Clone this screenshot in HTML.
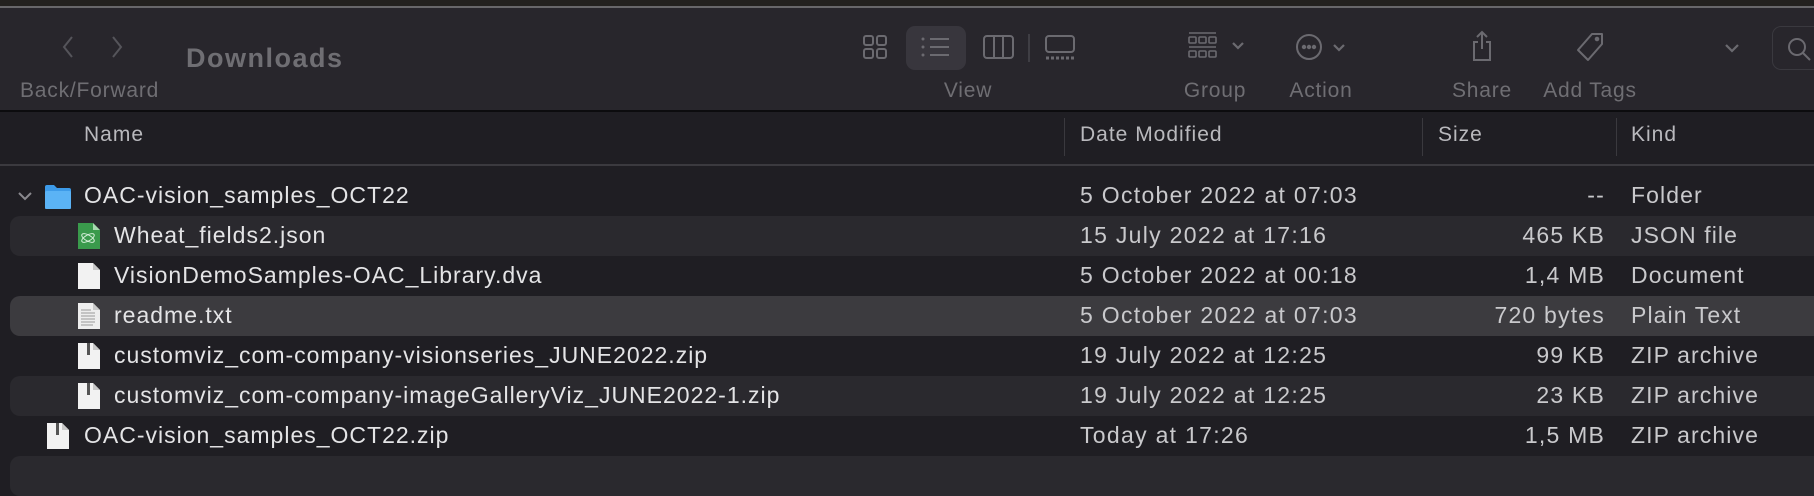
<!DOCTYPE html>
<html><head><meta charset="utf-8"><style>
*{margin:0;padding:0;box-sizing:border-box}
body{width:1814px;height:460px;overflow:hidden;background:#1f1e23;font-family:"Liberation Sans",sans-serif;position:relative}
.a{position:absolute;white-space:nowrap}
.lbl{color:#6f6e73;font-size:21px;letter-spacing:0.8px;top:79px;transform:translateX(-50%)}
.row{position:absolute;left:10px;width:1804px;height:40px;border-radius:10px 0 0 10px}
.nm{color:#e4e4e6;font-size:23px;letter-spacing:1px}
.dt{color:#c9c9cc;font-size:23px;letter-spacing:1.3px}
.sz{color:#c9c9cc;font-size:23px;letter-spacing:1.2px;text-align:right;width:250px;left:1355px}
.kd{color:#c9c9cc;font-size:23px;letter-spacing:1.1px;left:1631px}
.hd{color:#b9b9bd;font-size:21px;letter-spacing:1px;top:123px}
.ic{position:absolute}
</style></head><body>
<div class="a" style="left:0;top:0;width:1814px;height:6px;background:#23211f"></div>
<div class="a" style="left:0;top:6px;width:1814px;height:2px;background:#68676a"></div>
<div class="a" style="left:0;top:8px;width:1814px;height:103px;background:#28262c"></div>
<div class="a" style="left:0;top:110px;width:1814px;height:2px;background:#0c0c0e"></div>

<svg class="ic" style="left:58px;top:34px" width="70" height="26" viewBox="0 0 70 26" fill="none" stroke="#55545a" stroke-width="2"><path d="M14 3 L6 13 L14 23"/><path d="M55 3 L63 13 L55 23"/></svg>
<div class="a" style="left:20px;top:79px;color:#6f6e73;font-size:21px;letter-spacing:0.8px">Back/Forward</div>
<div class="a" style="left:186px;top:43px;color:#6f6e73;font-size:27px;font-weight:bold;letter-spacing:1.5px">Downloads</div>

<svg class="ic" style="left:862px;top:34px" width="26" height="26" fill="none" stroke="#6b6a70" stroke-width="2"><rect x="2" y="2" width="9" height="9" rx="2"/><rect x="15" y="2" width="9" height="9" rx="2"/><rect x="2" y="15" width="9" height="9" rx="2"/><rect x="15" y="15" width="9" height="9" rx="2"/></svg>
<div class="a" style="left:906px;top:26px;width:60px;height:44px;background:#38363d;border-radius:9px"></div>
<svg class="ic" style="left:920px;top:36px" width="32" height="22" fill="#6b6a70" stroke="#6b6a70" stroke-width="2"><circle cx="3" cy="3" r="1.5" stroke="none"/><circle cx="3" cy="11" r="1.5" stroke="none"/><circle cx="3" cy="19" r="1.5" stroke="none"/><path d="M10 3H29M10 11H29M10 19H29"/></svg>
<svg class="ic" style="left:982px;top:34px" width="34" height="26" fill="none" stroke="#6b6a70" stroke-width="2"><rect x="2" y="2" width="29" height="22" rx="3"/><path d="M12 2V24M21 2V24"/></svg>
<div class="a" style="left:1028px;top:34px;width:2px;height:28px;background:#3f3e44"></div>
<svg class="ic" style="left:1044px;top:34px" width="32" height="28" fill="none" stroke="#6b6a70" stroke-width="2"><rect x="2" y="2" width="28" height="16" rx="3"/><path d="M2 24H30" stroke-dasharray="3 2" stroke-width="3"/></svg>
<div class="a lbl" style="left:968px">View</div>

<svg class="ic" style="left:1188px;top:31px" width="70" height="30" fill="none" stroke="#6b6a70" stroke-width="1.6"><path d="M1 2H28M1 16H28"/><rect x="1" y="6" width="7" height="6" rx="1"/><rect x="11" y="6" width="7" height="6" rx="1"/><rect x="21" y="6" width="7" height="6" rx="1"/><rect x="1" y="20" width="7" height="6" rx="1"/><rect x="11" y="20" width="7" height="6" rx="1"/><rect x="21" y="20" width="7" height="6" rx="1"/><path d="M45 12L50 17L55 12" stroke-width="2.2"/></svg>
<div class="a lbl" style="left:1215px">Group</div>
<svg class="ic" style="left:1295px;top:33px" width="62" height="28" fill="none" stroke="#6b6a70" stroke-width="2"><circle cx="14" cy="14" r="12"/><circle cx="9" cy="14" r="1.2" fill="#6b6a70"/><circle cx="14" cy="14" r="1.2" fill="#6b6a70"/><circle cx="19" cy="14" r="1.2" fill="#6b6a70"/><path d="M39 12L44 17L49 12" stroke-width="2.2"/></svg>
<div class="a lbl" style="left:1321px">Action</div>
<svg class="ic" style="left:1470px;top:30px" width="24" height="32" fill="none" stroke="#6b6a70" stroke-width="2"><path d="M12 2V19M7 7L12 2L17 7"/><path d="M8 12H4V30H20V12H16"/></svg>
<div class="a lbl" style="left:1482px">Share</div>
<svg class="ic" style="left:1576px;top:32px" width="30" height="30" fill="none" stroke="#6b6a70" stroke-width="2"><path d="M16 2H26V12L12 28L2 18Z" stroke-linejoin="round"/><circle cx="21" cy="7" r="1.3" fill="#6b6a70"/></svg>
<div class="a lbl" style="left:1590px">Add Tags</div>
<svg class="ic" style="left:1724px;top:42px" width="16" height="12" fill="none" stroke="#6b6a70" stroke-width="2.2"><path d="M2 3L8 9L14 3"/></svg>
<div class="a" style="left:1772px;top:26px;width:60px;height:44px;border:1.5px solid #3a393f;border-radius:9px"></div>
<svg class="ic" style="left:1786px;top:36px" width="28" height="26" fill="none" stroke="#6b6a70" stroke-width="2"><circle cx="11" cy="11" r="8"/><path d="M17 17L24 24"/></svg>

<div class="a hd" style="left:84px">Name</div>
<div class="a" style="left:1064px;top:118px;width:1px;height:38px;background:#3a393e"></div>
<div class="a hd" style="left:1080px">Date Modified</div>
<div class="a" style="left:1422px;top:118px;width:1px;height:38px;background:#3a393e"></div>
<div class="a hd" style="left:1438px">Size</div>
<div class="a" style="left:1616px;top:118px;width:1px;height:38px;background:#3a393e"></div>
<div class="a hd" style="left:1631px">Kind</div>
<div class="a" style="left:0;top:164px;width:1814px;height:2px;background:#3b3a3f"></div>

<div class="row" style="top:216px;background:#2a292e"></div>
<div class="row" style="top:296px;background:#3c3b3f"></div>
<div class="row" style="top:376px;background:#2a292e"></div>
<div class="row" style="top:456px;background:#2a292e"></div>

<svg class="ic" style="left:17px;top:190px" width="16" height="12" fill="none" stroke="#8a898e" stroke-width="2"><path d="M2 3L8 9L14 3"/></svg>
<svg class="ic" style="left:44px;top:184px" width="28" height="26"><path d="M1 3Q1 1 3 1H10L13 4H25Q27 4 27 6V24Q27 25 25 25H3Q1 25 1 24Z" fill="#3d9be9"/><rect x="1" y="7" width="26" height="18" rx="1.5" fill="#5bb3f5"/></svg>
<div class="a nm" style="left:84px;top:182px">OAC-vision_samples_OCT22</div>
<div class="a dt" style="left:1080px;top:182px">5 October 2022 at 07:03</div>
<div class="a sz" style="top:182px">--</div>
<div class="a kd" style="top:182px">Folder</div>

<svg class="ic" style="left:77px;top:222px" width="24" height="28"><path d="M1 1H16L23 8V27H1Z" fill="#3a9a4c"/><path d="M16 1V8H23Z" fill="#a8d9b0"/><ellipse cx="11" cy="16" rx="7" ry="3" fill="none" stroke="#d6f0da" stroke-width="1" transform="rotate(30 11 16)"/><ellipse cx="11" cy="16" rx="7" ry="3" fill="none" stroke="#d6f0da" stroke-width="1" transform="rotate(-30 11 16)"/></svg>
<div class="a nm" style="left:114px;top:222px">Wheat_fields2.json</div>
<div class="a dt" style="left:1080px;top:222px">15 July 2022 at 17:16</div>
<div class="a sz" style="top:222px">465 KB</div>
<div class="a kd" style="top:222px">JSON file</div>

<svg class="ic" style="left:77px;top:262px" width="24" height="28"><path d="M1 1H16L23 8V27H1Z" fill="#f2f2f2"/><path d="M16 1V8H23Z" fill="#c8c8c8"/></svg>
<div class="a nm" style="left:114px;top:262px">VisionDemoSamples-OAC_Library.dva</div>
<div class="a dt" style="left:1080px;top:262px">5 October 2022 at 00:18</div>
<div class="a sz" style="top:262px">1,4 MB</div>
<div class="a kd" style="top:262px">Document</div>

<svg class="ic" style="left:77px;top:302px" width="24" height="28"><path d="M1 1H16L23 8V27H1Z" fill="#eeeeee"/><path d="M16 1V8H23Z" fill="#c8c8c8"/><path d="M4 8H14M4 11H18M4 14H18M4 17H18M4 20H18M4 23H16" stroke="#999" stroke-width="1"/></svg>
<div class="a nm" style="left:114px;top:302px">readme.txt</div>
<div class="a dt" style="left:1080px;top:302px">5 October 2022 at 07:03</div>
<div class="a sz" style="top:302px">720 bytes</div>
<div class="a kd" style="top:302px">Plain Text</div>

<svg class="ic" style="left:77px;top:342px" width="24" height="28"><path d="M1 1H16L23 8V27H1Z" fill="#f2f2f2"/><path d="M16 1V8H23Z" fill="#c8c8c8"/><rect x="10" y="1" width="3" height="12" fill="#555"/></svg>
<div class="a nm" style="left:114px;top:342px">customviz_com-company-visionseries_JUNE2022.zip</div>
<div class="a dt" style="left:1080px;top:342px">19 July 2022 at 12:25</div>
<div class="a sz" style="top:342px">99 KB</div>
<div class="a kd" style="top:342px">ZIP archive</div>

<svg class="ic" style="left:77px;top:382px" width="24" height="28"><path d="M1 1H16L23 8V27H1Z" fill="#f2f2f2"/><path d="M16 1V8H23Z" fill="#c8c8c8"/><rect x="10" y="1" width="3" height="12" fill="#555"/></svg>
<div class="a nm" style="left:114px;top:382px">customviz_com-company-imageGalleryViz_JUNE2022-1.zip</div>
<div class="a dt" style="left:1080px;top:382px">19 July 2022 at 12:25</div>
<div class="a sz" style="top:382px">23 KB</div>
<div class="a kd" style="top:382px">ZIP archive</div>

<svg class="ic" style="left:46px;top:422px" width="24" height="28"><path d="M1 1H16L23 8V27H1Z" fill="#f2f2f2"/><path d="M16 1V8H23Z" fill="#c8c8c8"/><rect x="10" y="1" width="3" height="12" fill="#555"/></svg>
<div class="a nm" style="left:84px;top:422px">OAC-vision_samples_OCT22.zip</div>
<div class="a dt" style="left:1080px;top:422px">Today at 17:26</div>
<div class="a sz" style="top:422px">1,5 MB</div>
<div class="a kd" style="top:422px">ZIP archive</div>
</body></html>
